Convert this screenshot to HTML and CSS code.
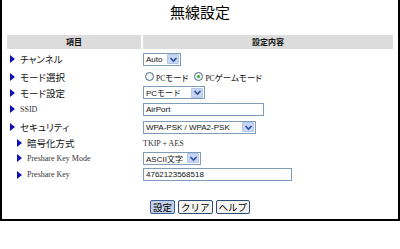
FILE: index.html
```html
<!DOCTYPE html>
<html lang="ja">

<head>
  <meta charset="UTF-8">
  <meta name="viewport" content="width=device-width, initial-scale=1.0">
  <title>無線設定</title>

  <link rel="stylesheet" href="styles.css">
</head>

<body>
  <div class="frame">
    <h1 class="title">無線設定</h1>

    <div class="settings">
      <div class="head">項目</div>
      <div class="head">設定内容</div>

      <div class="label r18"><span class="mark"></span>チャンネル</div>
      <div class="value">
        <span class="select w38"><span class="sel-text">Auto</span><span class="arrow"><svg width="9" height="7" viewBox="0 0 9 7"><path d="M1.5 2 L4.5 5 L7.5 2" fill="none" stroke="#2a4e9c" stroke-width="1.6"/></svg></span></span>
      </div>

      <div class="label r17"><span class="mark"></span>モード選択</div>
      <div class="value radios">
        <span class="radio"></span><span class="opt"><span class="pc">PC</span>モード</span>
        <span class="radio on"></span><span class="opt"><span class="pc">PC</span>ゲームモード</span>
      </div>

      <div class="label r15"><span class="mark"></span>モード設定</div>
      <div class="value">
        <span class="select w62"><span class="sel-text">PCモード</span><span class="arrow"><svg width="9" height="7" viewBox="0 0 9 7"><path d="M1.5 2 L4.5 5 L7.5 2" fill="none" stroke="#2a4e9c" stroke-width="1.6"/></svg></span></span>
      </div>

      <div class="label r18"><span class="mark"></span><span class="latin">SSID</span></div>
      <div class="value">
        <span class="field w121">AirPort</span>
      </div>

      <div class="label r18"><span class="mark"></span>セキュリティ</div>
      <div class="value">
        <span class="select w113"><span class="sel-text">WPA-PSK / WPA2-PSK</span><span class="arrow"><svg width="9" height="7" viewBox="0 0 9 7"><path d="M1.5 2 L4.5 5 L7.5 2" fill="none" stroke="#2a4e9c" stroke-width="1.6"/></svg></span></span>
      </div>

      <div class="label sub r14"><span class="mark"></span>暗号化方式</div>
      <div class="value"><span class="latin">TKIP + AES</span></div>

      <div class="label sub r16"><span class="mark"></span><span class="latin">Preshare Key Mode</span></div>
      <div class="value">
        <span class="select w58"><span class="sel-text">ASCII文字</span><span class="arrow"><svg width="9" height="7" viewBox="0 0 9 7"><path d="M1.5 2 L4.5 5 L7.5 2" fill="none" stroke="#2a4e9c" stroke-width="1.6"/></svg></span></span>
      </div>

      <div class="label sub r17"><span class="mark"></span><span class="latin">Preshare Key</span></div>
      <div class="value">
        <span class="field w149">4762123568518</span>
      </div>
    </div>

    <div class="buttons">
      <button class="btn focus">設定</button>
      <button class="btn">クリア</button>
      <button class="btn">ヘルプ</button>
    </div>
  </div>
</body>

</html>
```

FILE: styles.css
```css
body,
html {
  margin: 0;
  padding: 0;
  background-color: #fff;
  font-family: "Noto Sans CJK JP", "Liberation Sans", sans-serif;
  color: #111;
}

* {
  box-sizing: border-box;
}

.frame {
  width: 400px;
  height: 221px;

  border-left: 2px solid #000;
  border-right: 2px solid #000;
  border-bottom: 2px solid #000;
}

.title {
  margin: 0;
  height: 35px;
  padding-top: 1px;

  font-size: 15px;
  font-weight: normal;
  line-height: 22px;
  text-align: center;
  color: #000;
}

.settings {
  display: grid;
  grid-template-columns: 134px 250px;
  column-gap: 2px;

  margin-left: 5px;
}

.head {
  height: 14px;
  margin-bottom: 1px;

  background-color: #dcdcdc;
  font-size: 8px;
  font-weight: bold;
  line-height: 14px;
  text-align: center;
}

.label {
  display: flex;
  align-items: center;
  gap: 5px;

  padding-left: 3px;

  font-size: 9.5px;
  font-feature-settings: "palt";
}

.label.sub {
  padding-left: 10px;
}

.r14 { height: 14px; }
.r15 { height: 15px; }
.r16 { height: 16px; }
.r17 { height: 17px; }
.r18 { height: 18px; }

.mark {
  width: 0;
  height: 0;
  flex: none;

  border-top: 4px solid transparent;
  border-bottom: 4px solid transparent;
  border-left: 5px solid #1010b0;
}

.latin {
  font-family: "Liberation Serif", serif;
  font-size: 8px;
  color: #333;
}

.value {
  display: flex;
  align-items: center;
}

.select {
  display: flex;
  align-items: center;
  justify-content: space-between;

  height: 13px;
  padding: 0 1px 0 2px;

  background-color: #fff;
  border: 1px solid #7f9db9;

  font-family: "Liberation Sans", "Noto Sans CJK JP", sans-serif;
  font-size: 8px;
}

.arrow {
  display: flex;
  justify-content: center;
  align-items: center;

  width: 12px;
  height: 10px;

  background-color: #c7d6f4;
  border: 1px solid #b4c6ec;
  border-radius: 1px;
}

.w38 { width: 38px; }
.w58 { width: 58px; }
.w62 { width: 62px; }
.w113 { width: 113px; }
.w121 { width: 121px; }
.w149 { width: 149px; }

.field {
  display: flex;
  align-items: center;

  height: 13px;
  padding-left: 2px;

  border: 1px solid #7f9db9;

  font-family: "Liberation Sans", sans-serif;
  font-size: 8px;
}

.radios {
  gap: 2px;
  font-size: 8.5px;
  font-feature-settings: "palt";
}

.pc {
  font-family: "Liberation Serif", serif;
  font-size: 7.5px;
}

.radio {
  width: 9px;
  height: 9px;
  margin-left: 2px;

  border: 1px solid #4a6a94;
  border-radius: 50%;
  background-color: #f4f4f0;

  display: flex;
  justify-content: center;
  align-items: center;
}

.radio.on::after {
  content: "";
  width: 3px;
  height: 3px;
  border-radius: 50%;
  background-color: #2bb52b;
}

.opt {
  margin-right: 2px;
}

.buttons {
  display: flex;
  justify-content: center;
  gap: 3px;

  padding-top: 17px;
}

.btn {
  height: 14px;
  padding: 0 2px;

  font-family: "Noto Sans CJK JP", sans-serif;
  font-size: 9.5px;
  line-height: 11px;
  color: #000;

  background-color: #f4f4f0;
  border: 1px solid #2c4a74;
  border-radius: 2px;
}

.btn.focus {
  background-color: #c4d0e6;
  border-color: #3a5f9a;
}
```
